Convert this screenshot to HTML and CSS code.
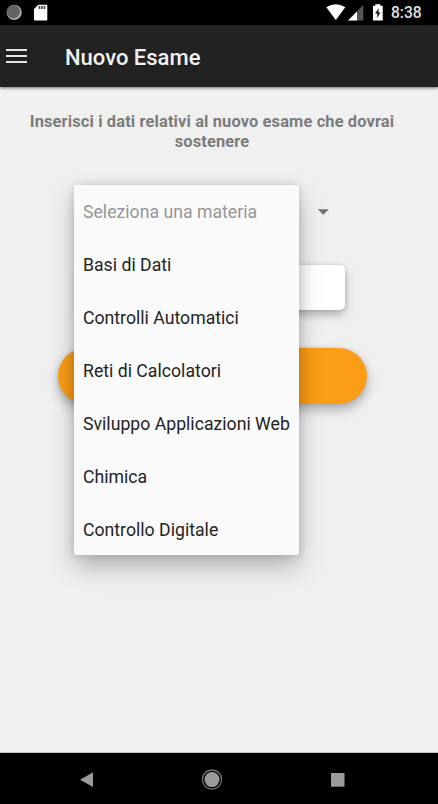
FILE: index.html
```html
<!DOCTYPE html>
<html lang="it">
<head>
<meta charset="utf-8">
<title>Nuovo Esame</title>
<link rel="stylesheet" href="styles.css">
</head>
<body>
<div class="status">
  <svg class="status-left" width="50" height="25" viewBox="0 0 50 25">
    <circle cx="14.2" cy="12.4" r="7.6" fill="#aaa"/>
    <circle cx="13.4" cy="11.6" r="6.6" fill="#626262"/>
    <path d="M38.3 4.7H46Q47.3 4.7 47.3 6V19.2Q47.3 20.5 46 20.5H35.3Q34 20.5 34 19.2V9z" fill="#fff"/>
    <path d="M39.5 6v3M42 6v3M44.5 6v3" stroke="#444" stroke-width="1.6"/>
  </svg>
  <svg class="status-right" width="60" height="25" viewBox="325 0 60 25">
    <path d="M326.3 7.2Q335.8 1.2 345.3 7.2L335.8 20z" fill="#fff"/>
    <path d="M363.3 5V20.5H348z" fill="#555"/>
    <path d="M357 11.4V20.5H348z" fill="#fff"/>
    <path d="M375.3 4.2H380.3V5.7H382.7V20.5H373V5.7H375.3z" fill="#fff"/>
    <path d="M379 8L375 13.6H377.4L376.8 18L380.6 12.4H378.3z" fill="#111"/>
  </svg>
  <span class="clock">8:38</span>
</div>
<header class="bar">
  <div class="burger"><i></i><i></i><i></i></div>
  <h1>Nuovo Esame</h1>
</header>
<main>
  <p class="intro">Inserisci i dati relativi al nuovo esame che dovrai<br>sostenere</p>
  <div class="form">
    <div class="select"><svg width="12" height="6" viewBox="0 0 12 6"><path d="M.8.2H11.8L6.3 5.8z" fill="#737373"/></svg></div>
    <div class="field"></div>
    <div class="button"></div>
    <ul class="menu">
      <li class="hint"><span>Seleziona una materia</span></li>
      <li><span>Basi di Dati</span></li>
      <li><span>Controlli Automatici</span></li>
      <li><span>Reti di Calcolatori</span></li>
      <li><span>Sviluppo Applicazioni Web</span></li>
      <li><span>Chimica</span></li>
      <li><span>Controllo Digitale</span></li>
    </ul>
  </div>
</main>
<nav>
  <svg width="438" height="51" viewBox="0 753 438 51">
    <path d="M80 779.7L93 772.3V787z" fill="#9b9b9b"/>
    <circle cx="212" cy="779.6" r="9.6" fill="none" stroke="#777" stroke-width="1.3"/>
    <circle cx="212" cy="779.6" r="7.5" fill="#9b9b9b"/>
    <rect x="331" y="773" width="13.5" height="13.7" fill="#9b9b9b"/>
  </svg>
</nav>
</body>
</html>
```
FILE: styles.css
```css
* { box-sizing: border-box; }
body {
  margin: 0;
  width: 438px;
  height: 804px;
  overflow: hidden;
  display: flex;
  flex-direction: column;
  background: #f0f0f0;
  font-family: Roboto, sans-serif;
}
.status {
  height: 25px;
  flex: none;
  display: flex;
  background: #000;
}
.status svg { display: block; flex: none; }
.status-right { margin-left: 275px; }
.clock {
  margin-left: 6px;
  font-size: 15.6px;
  font-weight: 500;
  line-height: 27px;
  color: #e0e0e0;
}
.bar {
  height: 62px;
  flex: none;
  display: flex;
  align-items: center;
  padding: 2px 0 0 6px;
  background: #222;
  box-shadow: 0 1px 3px rgba(0, 0, 0, .55);
}
.burger {
  width: 21px;
  display: grid;
  gap: 4px;
  margin-bottom: 2px;
}
.burger i { height: 2px; background: #e4e4e4; }
h1 {
  margin: 2px 0 0 38px;
  font-size: 22px;
  font-weight: 500;
  line-height: 28px;
  white-space: nowrap;
  color: #f2f2f2;
}
main { flex: 1; width: 424px; }
.intro {
  margin: 25px 0 0;
  font-size: 16.4px;
  font-weight: 700;
  line-height: 20px;
  letter-spacing: .14px;
  text-align: center;
  white-space: nowrap;
  color: #7c7c7c;
}
.form {
  position: relative;
  margin-top: 32px;
  padding-left: 58px;
}
.select {
  height: 81px;
  display: flex;
  padding: 25px 0 0 259px;
}
.field {
  width: 265px;
  height: 44.5px;
  margin-left: 22px;
  border-radius: 5px;
  background: #fff;
  box-shadow: 0 5px 10px rgba(0, 0, 0, .26), 0 0 5px rgba(0, 0, 0, .12);
}
.button {
  width: 309px;
  height: 55.5px;
  margin-top: 38.5px;
  border-radius: 28px;
  background: #fb9d17;
  box-shadow: 0 6px 12px rgba(0, 0, 0, .28), 0 0 4px rgba(0, 0, 0, .1);
}
.menu {
  position: absolute;
  left: 74px;
  top: .5px;
  width: 224.5px;
  height: 370.5px;
  margin: 0;
  padding: .5px 0 0 9px;
  list-style: none;
  border-radius: 2px;
  background: #fafafa;
  box-shadow: 0 12px 24px rgba(0, 0, 0, .26), 0 0 10px rgba(0, 0, 0, .14);
}
.menu li {
  height: 53px;
  font-size: 17.68px;
  line-height: 54px;
  white-space: nowrap;
  color: #242424;
}
.menu .hint { color: #969696; }
nav {
  height: 51px;
  flex: none;
  background: #000;
  box-shadow: 0 -1px 0 #c4c4c4;
}
nav svg { display: block; }
```
